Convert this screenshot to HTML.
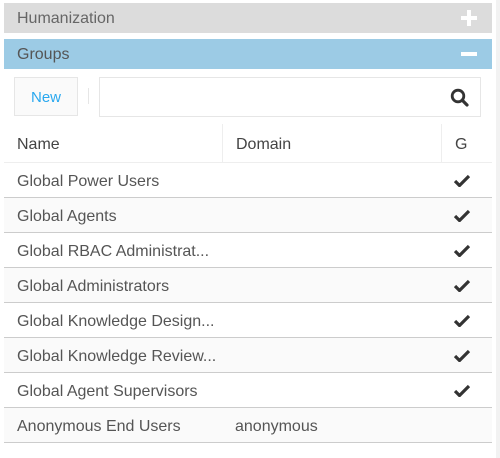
<!DOCTYPE html><html><head><style>
body{margin:0;width:500px;height:458px;background:#fff;font-family:"Liberation Sans",sans-serif;position:relative;overflow:hidden;color:#555}
.bar{position:absolute;left:4px;width:488px;height:30px;font-size:16px;line-height:31px;padding-left:13px;box-sizing:border-box;color:#666}
.ic{position:absolute;right:15px;top:7px;width:16px;height:16px}
.new{position:absolute;left:14px;top:77px;width:64px;height:39px;border:1px solid #e6e6e6;box-sizing:border-box;background:#fafafa;color:#29a8ef;font-size:15px;text-align:center;line-height:39px}
.sep{position:absolute;left:88px;top:88px;width:1px;height:16px;background:#e6e6e6}
.search{position:absolute;left:99px;top:77px;width:382px;height:40px;border:1px solid #e6e6e6;box-sizing:border-box}
.th{position:absolute;top:124px;height:39px;border-bottom:1px solid #eee;box-sizing:border-box;left:4px;width:488px}
.th span{position:absolute;top:12px;font-size:16px;color:#444}
.vs{position:absolute;top:0;width:1px;height:39px;background:#eee}
.row{position:absolute;left:4px;width:488px;height:35px;border-bottom:1px solid #ccc;box-sizing:border-box;font-size:16px}
.row .n{position:absolute;left:13px;top:10px}
.row .d{position:absolute;left:231px;top:10px}
.row svg{position:absolute;left:450px;top:11px}
.alt{background:#fafafa}
</style></head><body>
<div class="bar" style="top:3px;background:#dcdcdc">Humanization<svg class="ic" viewBox="0 0 16 16"><rect x="6" y="0" width="4" height="16" fill="#fff"/><rect x="0" y="6" width="16" height="4" fill="#fff"/></svg></div>
<div class="bar" style="top:39px;background:#9ccbe5;color:#555">Groups<svg class="ic" viewBox="0 0 16 16"><rect x="0" y="6" width="16" height="4" fill="#fff"/></svg></div>
<div class="new">New</div><div class="sep"></div>
<div class="search"><svg style="position:absolute;right:11px;top:10px" width="19" height="19" viewBox="0 0 19 19"><circle cx="8" cy="8" r="5.8" fill="none" stroke="#333" stroke-width="2.8"/><line x1="12.3" y1="12.3" x2="17" y2="17" stroke="#333" stroke-width="3.2" stroke-linecap="round"/></svg></div>
<div class="th"><span style="left:13px">Name</span><div class="vs" style="left:218px"></div><span style="left:232px">Domain</span><div class="vs" style="left:437px"></div><span style="left:451px">G</span></div>
<div class="row" style="top:163px"><span class="n">Global Power Users</span><svg width="16" height="13" viewBox="0 0 16 13"><path d="M1 7l4.5 4.5L15 2" fill="none" stroke="#333" stroke-width="3.2"/></svg></div>
<div class="row alt" style="top:198px"><span class="n">Global Agents</span><svg width="16" height="13" viewBox="0 0 16 13"><path d="M1 7l4.5 4.5L15 2" fill="none" stroke="#333" stroke-width="3.2"/></svg></div>
<div class="row" style="top:233px"><span class="n">Global RBAC Administrat...</span><svg width="16" height="13" viewBox="0 0 16 13"><path d="M1 7l4.5 4.5L15 2" fill="none" stroke="#333" stroke-width="3.2"/></svg></div>
<div class="row alt" style="top:268px"><span class="n">Global Administrators</span><svg width="16" height="13" viewBox="0 0 16 13"><path d="M1 7l4.5 4.5L15 2" fill="none" stroke="#333" stroke-width="3.2"/></svg></div>
<div class="row" style="top:303px"><span class="n">Global Knowledge Design...</span><svg width="16" height="13" viewBox="0 0 16 13"><path d="M1 7l4.5 4.5L15 2" fill="none" stroke="#333" stroke-width="3.2"/></svg></div>
<div class="row alt" style="top:338px"><span class="n">Global Knowledge Review...</span><svg width="16" height="13" viewBox="0 0 16 13"><path d="M1 7l4.5 4.5L15 2" fill="none" stroke="#333" stroke-width="3.2"/></svg></div>
<div class="row" style="top:373px"><span class="n">Global Agent Supervisors</span><svg width="16" height="13" viewBox="0 0 16 13"><path d="M1 7l4.5 4.5L15 2" fill="none" stroke="#333" stroke-width="3.2"/></svg></div>
<div class="row alt" style="top:408px"><span class="n">Anonymous End Users</span><span class="d">anonymous</span></div>
<div style="position:absolute;left:496px;top:0;width:4px;height:458px;background:#f2f2f2"></div>
</body></html>
